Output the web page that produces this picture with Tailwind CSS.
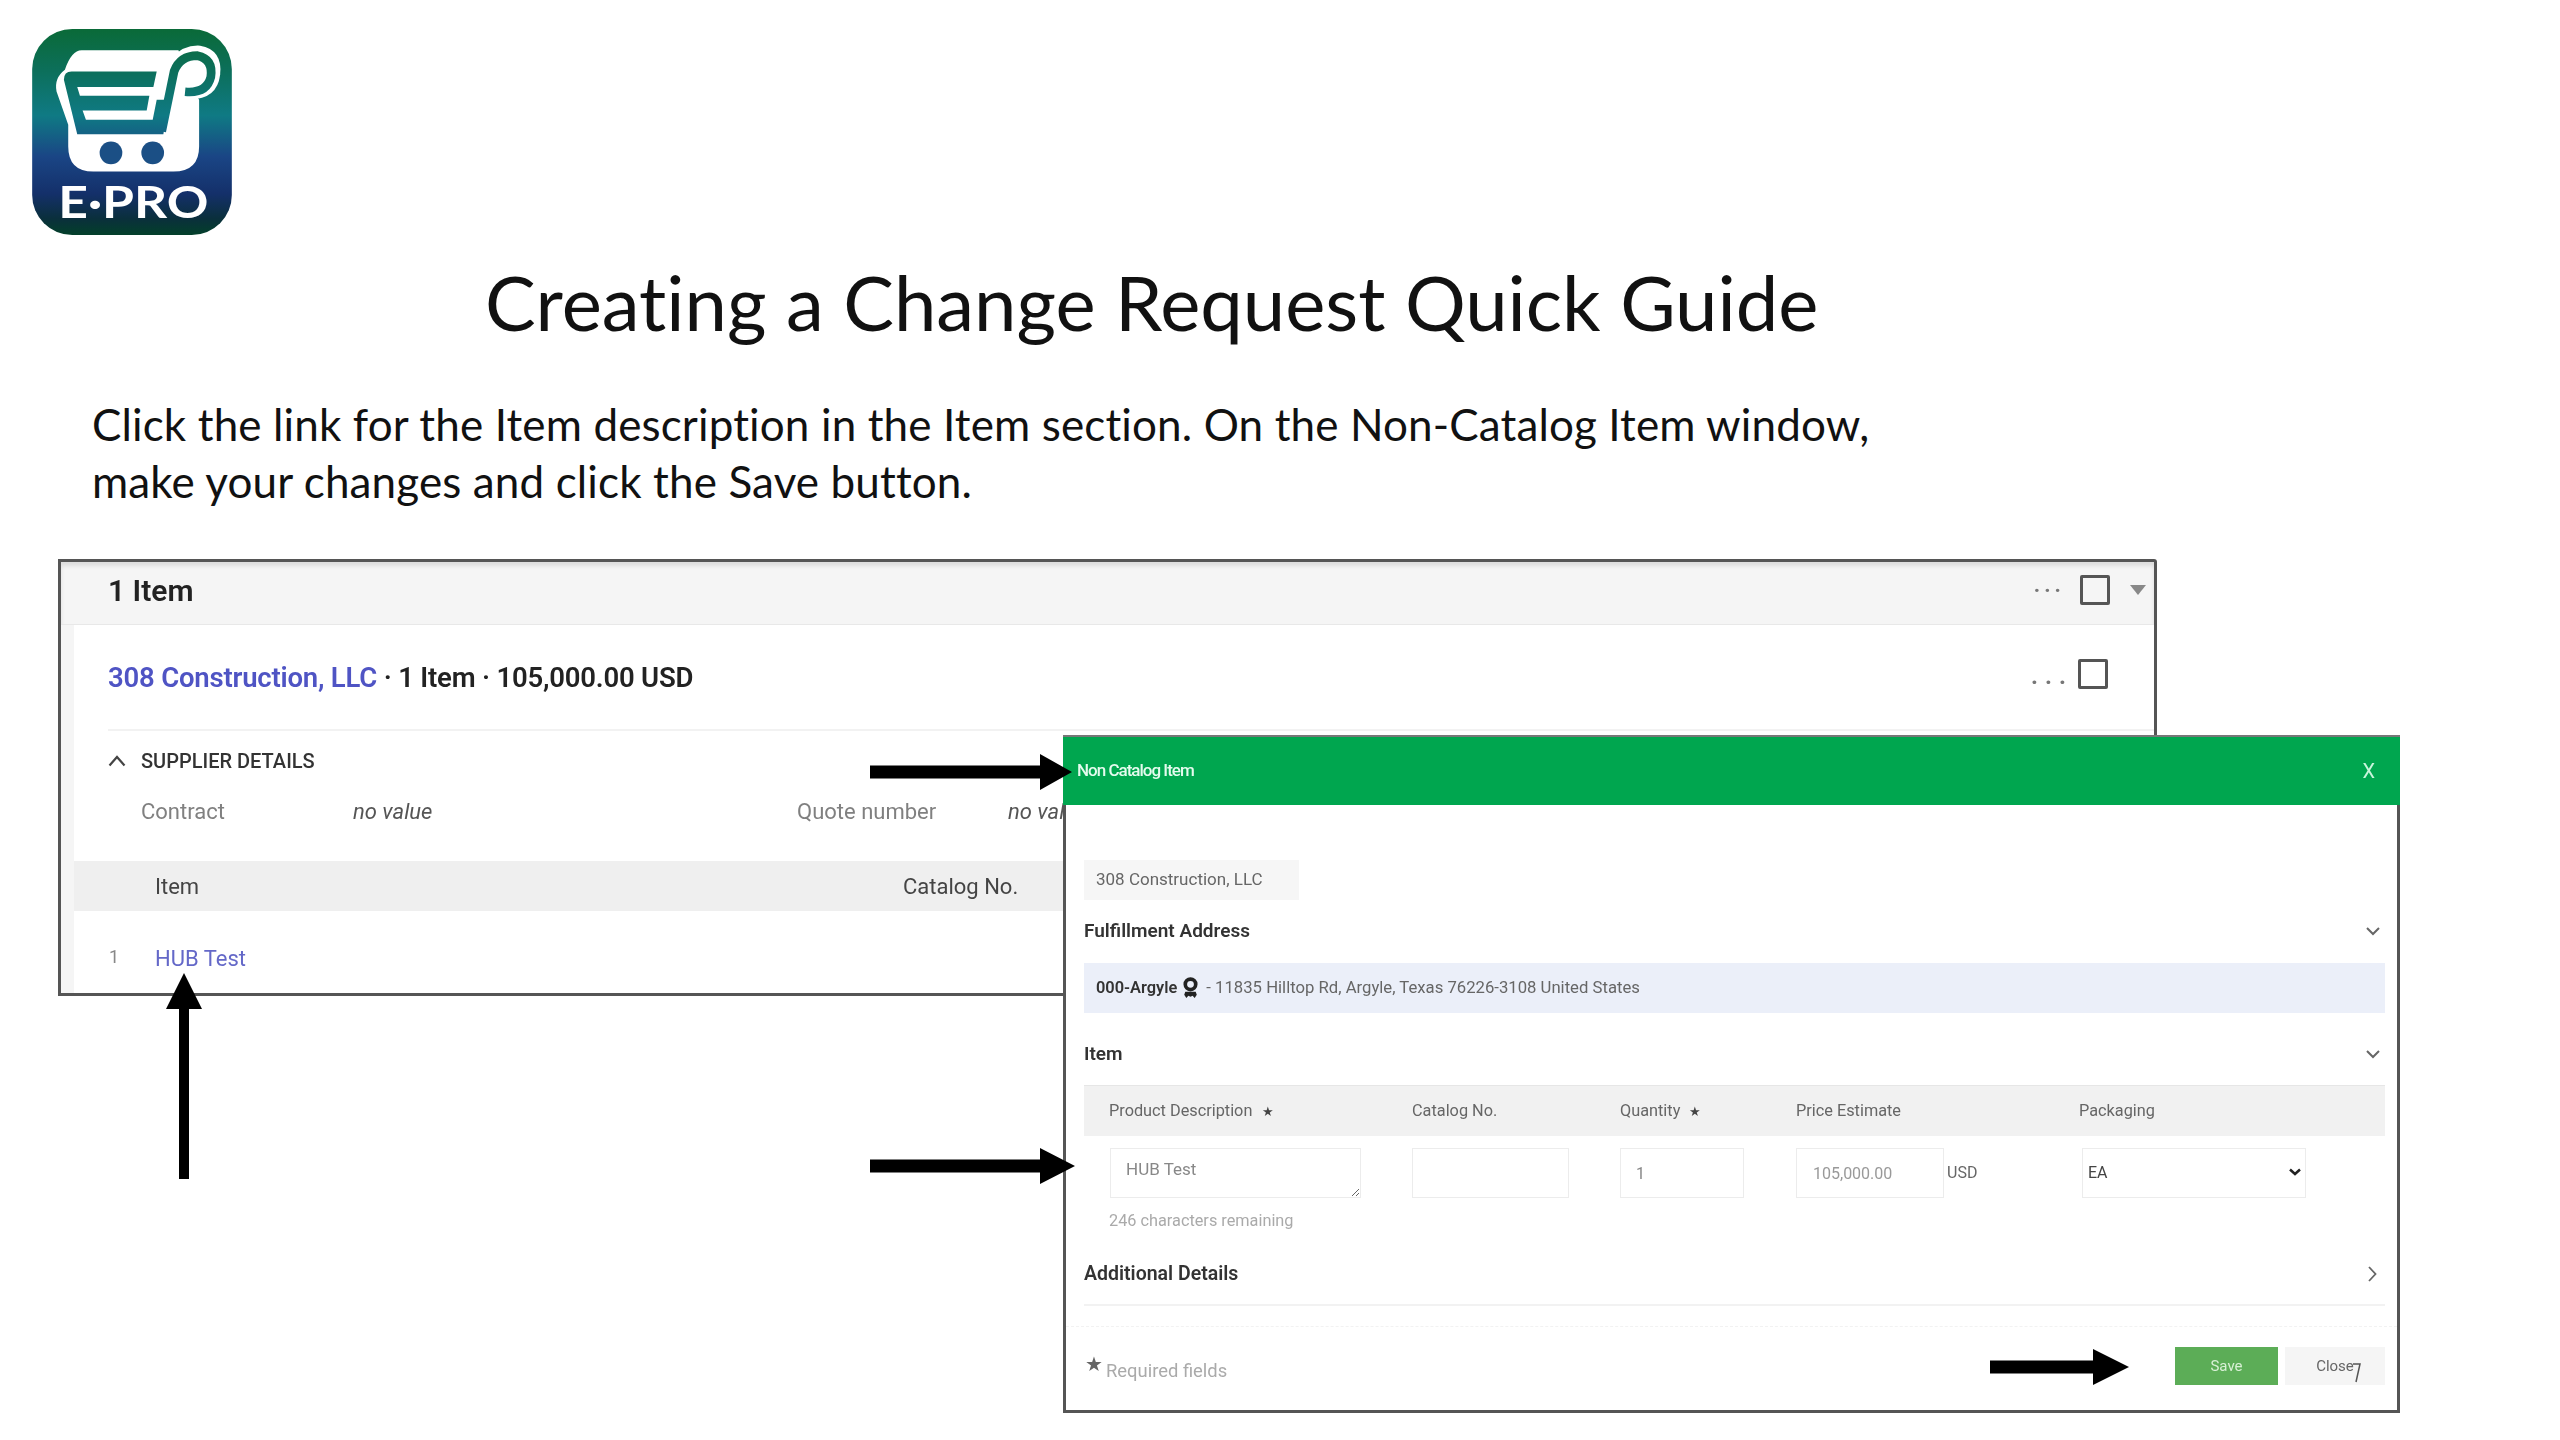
<!DOCTYPE html>
<html lang="en">
<head>
  <meta charset="UTF-8">
  <title>Creating a Change Request Quick Guide</title>
  <script src="https://cdn.jsdelivr.net/npm/@tailwindcss/browser@4"></script>
</head>
<body class="bg-white font-['Roboto',sans-serif]">
<div class="relative w-[2560px] h-[1440px] overflow-hidden bg-white">

  <!-- Logo -->
  <div class="pt-[29px] pl-[32px] h-[235px]">
    <svg width="200" height="206" viewBox="97 88 598 617" class="blur-[0.6px]">
      <defs>
        <linearGradient id="logoBg" gradientUnits="userSpaceOnUse" x1="0" y1="88" x2="0" y2="705">
          <stop offset="0" stop-color="#0a6a38"/>
          <stop offset="0.2" stop-color="#0c6f5a"/>
          <stop offset="0.42" stop-color="#0f7a84"/>
          <stop offset="0.62" stop-color="#1a4585"/>
          <stop offset="0.8" stop-color="#14306a"/>
          <stop offset="0.92" stop-color="#0a2f3c"/>
          <stop offset="1" stop-color="#03402a"/>
        </linearGradient>
      </defs>
      <rect x="97" y="88" width="598" height="617" rx="120" fill="url(#logoBg)"/>
      <path d="M245 152 H535 L590 290 L597 300 V440 Q597 515 520 515 H280 Q205 515 205 440 V375 L170 275 Q162 235 195 210 Q215 152 245 152 Z" fill="#fff"/>
      <path d="M515 175 Q550 135 600 138 Q668 150 660 225 Q650 305 555 298 Z" fill="#fff"/>
      <path d="M192 240 Q192 215 215 215 H470 L460 262 H232 L240 288 H448 L440 332 H248 L258 360 H458 L470 300 L505 300 L490 403 H232 Z" fill="url(#logoBg)"/>
      <path d="M485 395 L522 215 Q540 168 592 168 Q640 178 632 232 Q620 282 555 276" fill="none" stroke="url(#logoBg)" stroke-width="26"/>
      <circle cx="333" cy="459" r="34" fill="#1b4f85"/>
      <circle cx="458" cy="459" r="34" fill="#1b4f85"/>
      <text x="175" y="655" textLength="450" lengthAdjust="spacingAndGlyphs" font-family="Lato" font-weight="700" font-size="132" fill="#fff">E·PRO</text>
    </svg>
  </div>

  <!-- Title and instructions -->
  <h1 class="mt-[22px] pl-[485px] h-[90px] text-[76px] leading-[90px] text-[#111] font-['Lato',sans-serif] [font-variant-ligatures:none] whitespace-nowrap">Creating a Change Request Quick Guide</h1>
  <p class="mt-[49px] ml-[92px] text-[44px] leading-[57px] tracking-[0.13px] text-[#111] font-['Lato',sans-serif] [font-variant-ligatures:none] whitespace-nowrap">Click the link for the Item description in the Item section. On the Non-Catalog Item window,<br>make your changes and click the Save button.</p>

  <!-- Background screenshot: order panel -->
  <div class="mt-[49px] ml-[58px] w-[2099px] h-[437px] border-[3px] border-[#555] rounded-tr-[3px] bg-[#f5f5f5] flex flex-col blur-[0.5px] overflow-hidden">
    <div class="h-[63px] shrink-0 flex items-center pl-[47px] pr-[8px] pb-[6px] border-b border-[#e8e8e8] shadow-[inset_0_4px_4px_rgba(0,0,0,0.1)]">
      <span class="text-[30px] font-semibold text-[#222]">1 Item</span>
      <div class="ml-auto flex items-center">
        <span class="text-[#777] text-[22px] tracking-[4px] font-bold -mt-[12px]">...</span>
        <span class="ml-[15px] w-[30px] h-[30px] border-[3px] border-[#555] rounded-[2px]"></span>
        <svg width="16" height="10" viewBox="0 0 16 10" class="ml-[20px]"><path d="M0 0H16L8 10Z" fill="#888"/></svg>
      </div>
    </div>
    <div class="flex-1 ml-[13px] bg-white flex flex-col">
      <div class="h-[104px] pt-[2px] shrink-0 flex items-center pl-[34px] pr-[46px]">
        <span class="text-[27.500px] font-semibold text-[#222] tracking-[-0.2px]"><span class="text-[#4f54c4]">308 Construction, LLC</span> · 1 Item · 105,000.00 USD</span>
        <div class="ml-auto flex items-center">
          <span class="text-[#777] text-[24px] tracking-[7px] font-bold mt-[-4px]">...</span>
          <span class="ml-[5px] -mt-[8px] w-[30px] h-[30px] border-[3px] border-[#555] rounded-[2px]"></span>
        </div>
      </div>
      <div class="ml-[34px] border-t-2 border-[#f2f2f2] h-[62px] flex items-center">
        <svg width="18" height="12" viewBox="0 0 18 12" class="shrink-0"><path d="M1.500 10.500L9 2l7.500 8.500" fill="none" stroke="#444" stroke-width="2.200"/></svg>
        <span class="ml-[15px] text-[20px] font-medium text-[#333] whitespace-nowrap">SUPPLIER DETAILS</span>
      </div>
      <div class="h-[40px] pl-[67px] flex items-center text-[22px] whitespace-nowrap">
        <span class="w-[212px] text-[#808080]">Contract</span>
        <span class="w-[444px] italic text-[#555]">no value</span>
        <span class="w-[211px] text-[#808080]">Quote number</span>
        <span class="italic text-[#555]">no value</span>
      </div>
      <div class="mt-[30px] h-[50px] bg-[#efefef] pl-[81px] flex items-center text-[22px] text-[#444]">
        <span class="w-[748px]">Item</span>
        <span>Catalog No.</span>
      </div>
      <div class="pt-[31px] pl-[35px] flex items-center text-[22px]">
        <span class="w-[46px] text-[#888] text-[18px] -mt-[4px]">1</span>
        <span class="text-[#6468c8]">HUB Test</span>
      </div>
    </div>
  </div>

  <!-- Foreground screenshot: Non Catalog Item window -->
  <div class="absolute left-[1063px] top-[735px] w-[1337px] h-[678px] border-[3px] border-t-0 border-[#555] bg-white blur-[0.5px]">
    <div class="-mx-[3px] h-[70px] border-t-2 border-[#777] bg-[#00a64f] flex items-center pl-[14px] pr-[25px] text-[#c9f5dc]">
      <span class="text-[17px] font-medium tracking-[-1px] text-[#e4fbee]">Non Catalog Item</span>
      <span class="ml-auto text-[20px]">X</span>
    </div>
    <div class="pl-[18px] pr-[12px]">
      <div class="mt-[55px] w-[215px] h-[40px] bg-[#f6f6f6] flex items-center pl-[12px] text-[17px] text-[#666]">308 Construction, LLC</div>
      <div class="h-[63px] flex items-center justify-between pr-[5px] text-[19px] font-semibold text-[#333]">
        <span>Fulfillment Address</span>
        <svg width="14" height="9" viewBox="0 0 14 9"><path d="M1 1l6 6 6-6" fill="none" stroke="#666" stroke-width="2"/></svg>
      </div>
      <div class="h-[50px] bg-[#ebeff9] flex items-center pl-[12px] text-[16.400px] whitespace-nowrap">
        <span class="font-semibold text-[#333]">000-Argyle</span>
        <svg width="17" height="23" viewBox="0 0 16 22" class="ml-[5px]">
          <circle cx="8" cy="7" r="5" fill="none" stroke="#222" stroke-width="3.500"/>
          <path d="M3 14h10l1 3-2 3-2-2-2 1-2-1-2 2-2-3z" fill="#222"/>
        </svg>
        <span class="ml-[7px] text-[16.700px] text-[#666]">- 11835 Hilltop Rd, Argyle, Texas 76226-3108 United States</span>
      </div>
      <div class="h-[72px] pt-[10px] flex items-center justify-between pr-[5px] text-[19px] font-semibold text-[#333]">
        <span>Item</span>
        <svg width="14" height="9" viewBox="0 0 14 9"><path d="M1 1l6 6 6-6" fill="none" stroke="#666" stroke-width="2"/></svg>
      </div>

      <div class="h-[51px] border-t border-[#e6e6e6] bg-[#f1f1f1] pl-[25px] grid grid-cols-[303px_208px_176px_283px_1fr] items-center text-[16.300px] text-[#666] whitespace-nowrap">
        <span>Product Description <span class="ml-[6px] text-[13px] text-[#444]">★</span></span>
        <span>Catalog No.</span>
        <span>Quantity <span class="ml-[5px] text-[13px] text-[#444]">★</span></span>
        <span>Price Estimate</span>
        <span>Packaging</span>
      </div>
      <div class="mt-[12px] pl-[26px] grid grid-cols-[302px_208px_176px_286px_1fr] text-[16px]">
        <textarea class="w-[251px] h-[50px] border border-[#ececec] pl-[15px] pt-[10px] leading-[20px] text-[17px] text-[#888]">HUB Test</textarea>
        <input class="w-[157px] h-[50px] border border-[#ececec]" value="">
        <input class="w-[124px] h-[50px] border border-[#ececec] pl-[15px] text-[#888]" value="1">
        <div class="flex items-center">
          <input class="w-[148px] h-[50px] border border-[#ececec] pl-[16px] text-[#999]" value="105,000.00">
          <span class="ml-[3px] text-[#666]">USD</span>
        </div>
        <div class="relative w-[224px] h-[50px]">
          <select class="appearance-none w-full h-full border border-[#ececec] pl-[5px] text-[#444] bg-white"><option>EA</option></select>
          <svg width="12" height="8" viewBox="0 0 12 8" class="absolute right-[5px] top-[20px]"><path d="M1 1.500l5 4.500 5-4.500" fill="none" stroke="#222" stroke-width="2.500"/></svg>
        </div>
      </div>
      <div class="mt-[13px] pl-[25px] h-[20px] leading-[20px] text-[16.300px] text-[#aaa]">246 characters remaining</div>
      <div class="h-[75px] pt-[12px] border-b-2 border-[#f2f2f2] flex items-center justify-between pr-[8px] text-[19.500px] font-semibold text-[#333]">
        <span>Additional Details</span>
        <svg width="9" height="16" viewBox="0 0 9 16"><path d="M1 1l6.500 7-6.500 7" fill="none" stroke="#666" stroke-width="1.800"/></svg>
      </div>
    </div>
    <div class="mt-[20px] border-t border-dashed border-[#f2f2f2]"></div>
    <div class="mt-[20px] pl-[19px] pr-[12px] flex items-center">
      <span class="text-[#666] text-[20px] leading-none -mt-[4px]">★</span>
      <span class="ml-[3px] mt-[10px] text-[18.400px] text-[#aaa]">Required fields</span>
      <button class="ml-auto w-[103px] h-[38px] bg-[#5cad57] text-[15px] text-[#d8f0d5]">Save</button>
      <button class="relative ml-[7px] w-[100px] h-[38px] bg-[#f5f5f5] text-[15px] text-[#666]">Close
        <svg width="8" height="20" viewBox="0 0 8 20" class="absolute left-[68px] top-[16px]"><path d="M0 1h7L3 19" fill="none" stroke="#555" stroke-width="1.500"/></svg>
      </button>
    </div>
  </div>

  <!-- Callout arrows -->
  <svg class="absolute left-[166px] top-[973px]" width="36" height="206" viewBox="0 0 36 206"><path d="M18 0L36 36H23V206H13V36H0Z" fill="#000"/></svg>
  <svg class="absolute left-[870px] top-[754px]" width="202" height="36" viewBox="0 0 202 36"><path d="M202 18L170 0V11.500H0V24.500H170V36Z" fill="#000"/></svg>
  <svg class="absolute left-[870px] top-[1148px]" width="205" height="36" viewBox="0 0 205 36"><path d="M205 18L170 0V11.500H0V24.500H170V36Z" fill="#000"/></svg>
  <svg class="absolute left-[1990px] top-[1349px]" width="139" height="36" viewBox="0 0 139 36"><path d="M139 18L103 0V11.500H0V24.500H103V36Z" fill="#000"/></svg>

</div>
</body>
</html>
